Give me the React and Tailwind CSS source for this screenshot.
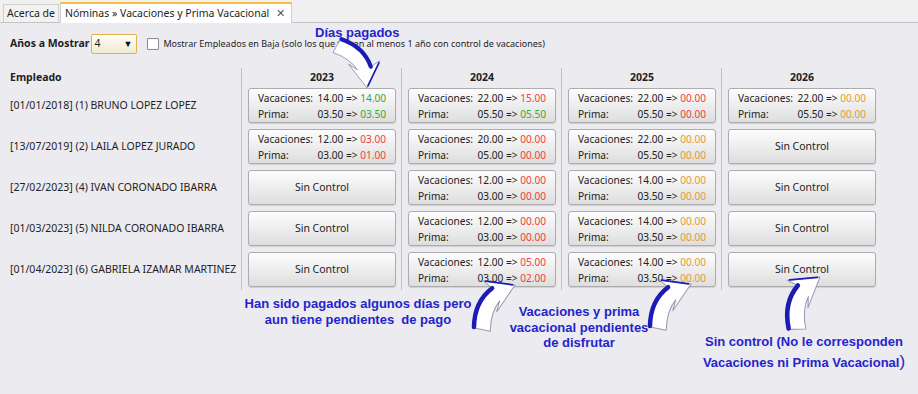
import React from "react";

const G = "text-[#3aa83a]";
const R = "text-[#f53b3b]";
const O = "text-[#e49a35]";

const years = ["2023", "2024", "2025", "2026"];

const rows = [
  {
    name: "[01/01/2018] (1) BRUNO LOPEZ LOPEZ",
    cells: [
      { v: ["14.00", "14.00", G], p: ["03.50", "03.50", G] },
      { v: ["22.00", "15.00", R], p: ["05.50", "05.50", G] },
      { v: ["22.00", "00.00", R], p: ["05.50", "00.00", R] },
      { v: ["22.00", "00.00", O], p: ["05.50", "00.00", O] },
    ],
  },
  {
    name: "[13/07/2019] (2) LAILA LOPEZ JURADO",
    cells: [
      { v: ["12.00", "03.00", R], p: ["03.00", "01.00", R] },
      { v: ["20.00", "00.00", R], p: ["05.00", "00.00", R] },
      { v: ["22.00", "00.00", O], p: ["05.50", "00.00", O] },
      null,
    ],
  },
  {
    name: "[27/02/2023] (4) IVAN CORONADO IBARRA",
    cells: [
      null,
      { v: ["12.00", "00.00", R], p: ["03.00", "00.00", R] },
      { v: ["14.00", "00.00", O], p: ["03.50", "00.00", O] },
      null,
    ],
  },
  {
    name: "[01/03/2023] (5) NILDA CORONADO IBARRA",
    cells: [
      null,
      { v: ["12.00", "00.00", R], p: ["03.00", "00.00", R] },
      { v: ["14.00", "00.00", O], p: ["03.50", "00.00", O] },
      null,
    ],
  },
  {
    name: "[01/04/2023] (6) GABRIELA IZAMAR MARTINEZ",
    cells: [
      null,
      { v: ["12.00", "05.00", R], p: ["03.00", "02.00", R] },
      { v: ["14.00", "00.00", O], p: ["03.50", "00.00", O] },
      null,
    ],
  },
];

function Line({ label, data }) {
  return (
    <div className="flex justify-between gap-[3px] leading-[16px] whitespace-nowrap">
      <span>{label}</span>
      <span>
        {data[0]} =&gt; <span className={data[2]}>{data[1]}</span>
      </span>
    </div>
  );
}

function Card({ cell }) {
  return (
    <div className="h-[35px] w-[148px] rounded-[3px] border border-[#acacac] bg-gradient-to-b from-[#fdfdfd] to-[#dedede] shadow-[0_1px_1px_rgba(0,0,0,0.12)] text-[#222]">
      {cell ? (
        <div className="pl-[9px] pr-[9px] pt-[1px] text-[10.1px]">
          <Line label="Vacaciones:" data={cell.v} />
          <Line label="Prima:" data={cell.p} />
        </div>
      ) : (
        <div className="h-full flex items-center justify-center">Sin Control</div>
      )}
    </div>
  );
}

function Arrow({ x, y, rot, s = 1 }) {
  return (
    <g transform={`translate(${x} ${y}) rotate(${rot}) scale(${s})`}>
      <path
        d="M 0 0 L -24 16 L -18 8 Q -29 14 -36 30 L -48 22 Q -39 0 -20 -5 L -25 -14 Z"
        fill="#ffffff"
        stroke="#9a9ab2"
        strokeWidth="0.9"
        strokeLinejoin="round"
      />
      <path d="M -48 21 Q -39 0 -20 -5" fill="none" stroke="#1c1cb4" strokeWidth="4" strokeLinecap="round" />
      <path d="M -23 -13 L -2 -1" fill="none" stroke="#1c1cb4" strokeWidth="1.6" strokeLinecap="round" />
    </g>
  );
}

export default function App() {
  return (
    <div
      className="relative w-[918px] h-[394px] overflow-hidden bg-[#ecebef] text-[#1e1e1e] text-[10.5px]"
      style={{ fontFamily: '"Noto Sans", "Open Sans", sans-serif' }}
    >
      {/* tabs */}
      <div className="h-[23px] bg-[#f0f0f0] border-b border-[#c4c4c4] flex items-end pl-[3px] whitespace-nowrap">
        <div className="h-[18px] w-[56px] border border-b-0 border-[#cfcfcf] bg-[#f2f2f2] flex items-center justify-center">
          Acerca de
        </div>
        <div className="h-[21px] w-[232px] ml-[1px] border border-b-0 border-[#cfcfcf] border-t-2 border-t-[#f5c040] bg-white flex items-center justify-between pl-[4px] pr-[6px] -mb-px">
          <span>Nóminas » Vacaciones y Prima Vacacional</span>
          <span className="text-[#555] text-[11px]">✕</span>
        </div>
      </div>

      {/* toolbar */}
      <div className="flex items-center h-[20px] mt-[11px] pl-[10px] whitespace-nowrap">
        <span className="font-bold">Años a Mostrar</span>
        <div className="ml-[2px] w-[46px] h-[20px] border border-[#e1b24d] rounded-[2px] bg-gradient-to-b from-[#fffdf6] to-[#f3ead4] flex items-center justify-between pl-[2px] pr-[4px]">
          <span>4</span>
          <span className="text-[9px] text-[#111]">▼</span>
        </div>
        <div className="ml-[10px] w-[12px] h-[12px] border border-[#8d8d8d] bg-white rounded-[1px]" />
        <span className="ml-[4px] text-[9px]">
          Mostrar Empleados en Baja (solo los que tienen al menos 1 año con control de vacaciones)
        </span>
      </div>

      {/* grid */}
      <div className="flex mt-[14px] whitespace-nowrap">
        <div className="w-[241px] pl-[10px]">
          <div className="h-[20px] font-bold flex items-center">Empleado</div>
          <div className="flex flex-col gap-[6px]">
            {rows.map((r) => (
              <div key={r.name} className="h-[35px] flex items-center">
                {r.name}
              </div>
            ))}
          </div>
        </div>
        {years.map((y, i) => (
          <div key={y} className="w-[160px] border-l border-[#c2c2c2] pl-[6px] pb-[3px]">
            <div className="h-[20px] w-[148px] font-bold flex items-center justify-center">{y}</div>
            <div className="flex flex-col gap-[6px]">
              {rows.map((r) => (
                <Card key={r.name} cell={r.cells[i]} />
              ))}
            </div>
          </div>
        ))}
      </div>

      {/* annotations */}
      <div
        className="absolute inset-0 pointer-events-none text-[#2424cc] font-bold text-[13px]"
        style={{ fontFamily: '"Liberation Sans", Arial, sans-serif' }}
      >
        <div className="absolute left-[315px] top-[25px] leading-[16px]">Días pagados</div>
        <div className="absolute left-[236px] top-[296px] w-[244px] text-center leading-[16px] whitespace-pre">
          {"Han sido pagados algunos días pero\naun tiene pendientes  de pago"}
        </div>
        <div className="absolute left-[499px] top-[304px] w-[160px] text-center leading-[15.5px]">
          Vacaciones y prima
          <br />
          vacacional pendientes
          <br />
          de disfrutar
        </div>
        <div className="absolute left-[694px] top-[332px] w-[220px] text-center leading-[20px] whitespace-nowrap">
          Sin control (No le corresponden
          <br />
          Vacaciones ni Prima Vacacional<span className="text-[17px] font-normal">)</span>
        </div>
        <svg className="absolute inset-0" width="918" height="394">
          <Arrow x={367} y={88} rot={86} s={1.05} />
          <Arrow x={515} y={285} rot={-22} s={1.12} />
          <Arrow x={691} y={284} rot={-22} s={1.12} />
          <Arrow x={820} y={277} rot={-35} s={1.15} />
        </svg>
      </div>
    </div>
  );
}
